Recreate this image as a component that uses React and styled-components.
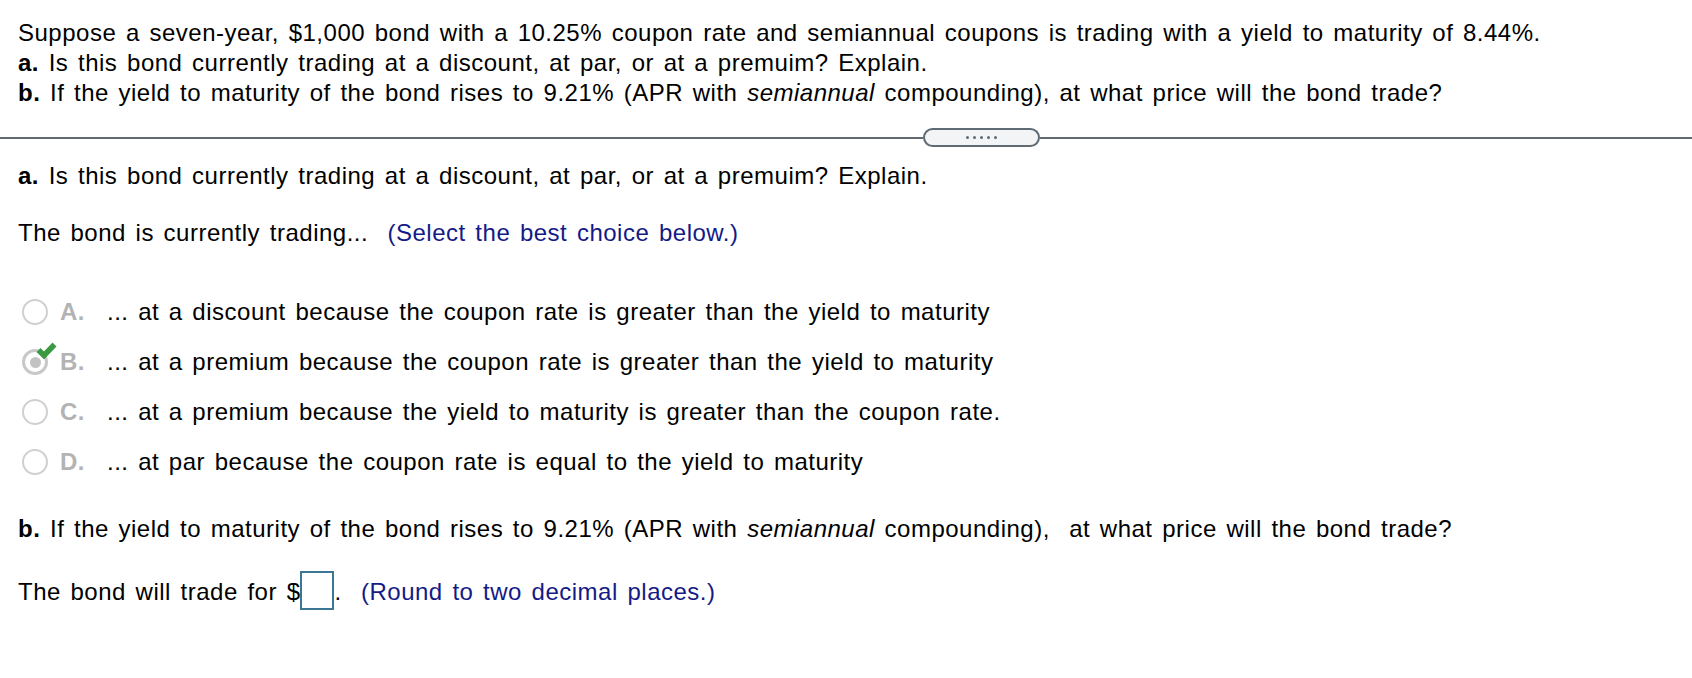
import React from 'react';
import styled, { createGlobalStyle } from 'styled-components';

const GlobalStyle = createGlobalStyle`
  body {
    margin: 0;
    background: #fff;
    color: #000;
    font-family: "Liberation Sans", Arial, sans-serif;
    font-size: 24px;
    letter-spacing: 0.5px;
    word-spacing: 2.5px;
  }
`;

const Page = styled.div`
  padding-top: 18px;
`;

const Section = styled.div`
  padding-left: 18px;
`;

const Line = styled.div`
  line-height: 30px;
  margin-top: ${({ gap }) => gap || 0}px;
  white-space: nowrap;
`;

const Hint = styled.span`
  color: #141a86;
`;

const Divider = styled.div`
  display: flex;
  align-items: center;
  margin-top: 20px;
  height: 19px;
`;

const Rule = styled.div`
  height: 2px;
  background: #5f6a73;
  flex: ${({ grow }) => (grow ? 1 : 'none')};
  width: ${({ w }) => (w ? `${w}px` : 'auto')};
`;

const Pill = styled.button`
  width: 117px;
  height: 19px;
  box-sizing: border-box;
  border: 2px solid #5f6a73;
  border-radius: 10px;
  background: #f3f4f6;
  padding: 0;
  display: flex;
  align-items: center;
  justify-content: center;
  gap: 4px;
`;

const Dot = styled.span`
  width: 3px;
  height: 3px;
  border-radius: 50%;
  background: #5f6a73;
`;

const Options = styled.div`
  margin-top: 39px;
`;

const Option = styled.div`
  display: flex;
  align-items: center;
  height: 50px;
  white-space: nowrap;
`;

const RadioWrap = styled.span`
  position: relative;
  width: 26px;
  height: 26px;
  margin-left: 4px;
  margin-right: 12px;
`;

const Radio = styled.span`
  display: flex;
  align-items: center;
  justify-content: center;
  box-sizing: border-box;
  width: 26px;
  height: 26px;
  border-radius: 50%;
  border: ${({ picked }) => (picked ? '3px solid #c8c8c8' : '2px solid #d0d0d0')};
  background: #fff;
`;

const RadioDot = styled.span`
  width: 11px;
  height: 11px;
  border-radius: 50%;
  background: #c2c2c2;
`;

const Check = styled.svg`
  position: absolute;
  left: 14px;
  top: -8px;
  width: 21px;
  height: 18px;
`;

const Letter = styled.span`
  width: 47px;
  font-weight: bold;
  color: #b3b3b3;
  word-spacing: 0;
`;

const AnswerBox = styled.span`
  display: inline-block;
  vertical-align: middle;
  box-sizing: border-box;
  width: 34px;
  height: 39px;
  border: 2px solid #3b7795;
  margin-top: -6px;
`;

const choices = [
  { key: 'A', text: '... at a discount because the coupon rate is greater than the yield to maturity' },
  { key: 'B', text: '... at a premium because the coupon rate is greater than the yield to maturity', picked: true },
  { key: 'C', text: '... at a premium because the yield to maturity is greater than the coupon rate.' },
  { key: 'D', text: '... at par because the coupon rate is equal to the yield to maturity' },
];

export default function App() {
  return (
    <Page>
      <GlobalStyle />
      <Section>
        <Line>
          Suppose a seven-year, $1,000 bond with a 10.25% coupon rate and semiannual coupons is trading with a yield to maturity of 8.44%.
        </Line>
        <Line>
          <b>a.</b> Is this bond currently trading at a discount, at par, or at a premuim? Explain.
        </Line>
        <Line>
          <b>b.</b> If the yield to maturity of the bond rises to 9.21% (APR with <i>semiannual</i> compounding), at what price will the bond trade?
        </Line>
      </Section>

      <Divider>
        <Rule w={923} />
        <Pill>
          <Dot /><Dot /><Dot /><Dot /><Dot />
        </Pill>
        <Rule grow />
      </Divider>

      <Section>
        <Line gap={14}>
          <b>a.</b> Is this bond currently trading at a discount, at par, or at a premuim? Explain.
        </Line>
        <Line gap={27}>
          The bond is currently trading...&nbsp; <Hint>(Select the best choice below.)</Hint>
        </Line>

        <Options>
          {choices.map((c) => (
            <Option key={c.key}>
              <RadioWrap>
                <Radio picked={c.picked}>{c.picked && <RadioDot />}</Radio>
                {c.picked && (
                  <Check viewBox="0 0 21 18">
                    <path d="M2.5 9 L8 14.5 L18.5 3.5" fill="none" stroke="#3b9a3f" strokeWidth="5.5" strokeLinejoin="miter" />
                  </Check>
                )}
              </RadioWrap>
              <Letter>{c.key}.</Letter>
              <span>{c.text}</span>
            </Option>
          ))}
        </Options>

        <Line gap={27}>
          <b>b.</b> If the yield to maturity of the bond rises to 9.21% (APR with <i>semiannual</i> compounding),&nbsp; at what price will the bond trade?
        </Line>
        <Line gap={33}>
          The bond will trade for $<AnswerBox />.&nbsp; <Hint>(Round to two decimal places.)</Hint>
        </Line>
      </Section>
    </Page>
  );
}
